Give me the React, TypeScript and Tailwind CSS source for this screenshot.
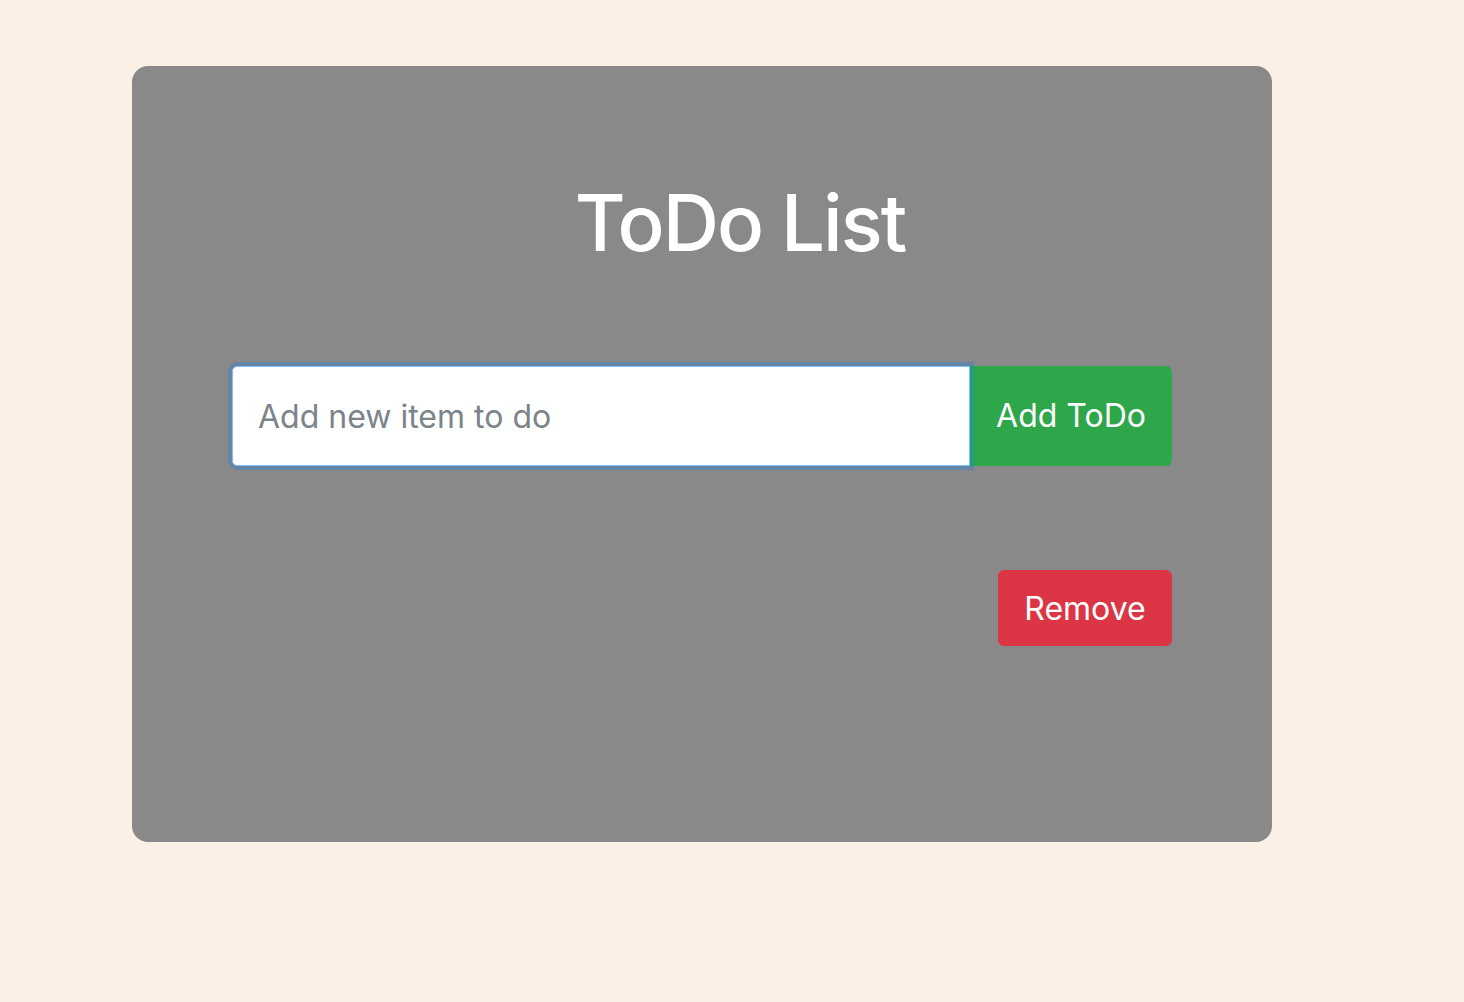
import React from "react";

export default function App() {
  return (
    <div
      className="min-h-screen w-full bg-[#faf0e6] pt-[66px] pl-[132px]"
      style={{ fontFamily: "Inter, 'Noto Sans', sans-serif" }}
    >
      <div className="w-[1140px] h-[776px] rounded-[16px] bg-[#898989] px-[100px] pt-[118px]">
        <h1 className="text-center pl-[76px] text-[78px] leading-[78px] font-medium text-white tracking-[-2px]">
          ToDo List
        </h1>
        <div className="mt-[104px] flex h-[100px]">
          <input
            type="text"
            placeholder="Add new item to do"
            className="relative z-10 flex-1 h-[100px] rounded-l-[5px] border border-[#80bdff] bg-white px-[25px] text-[32px] text-[#495057] placeholder:text-[#7b838b] outline-none shadow-[0_0_0_4px_rgba(0,123,255,0.25)]"
          />
          <button className="w-[202px] h-[100px] rounded-r-[6px] bg-[#2ea64a] text-[32px] text-white">
            Add ToDo
          </button>
        </div>
        <div className="mt-[104px] flex justify-end">
          <button className="w-[174px] h-[76px] pt-[2px] rounded-[6px] bg-[#dc3545] text-[32px] text-white">
            Remove
          </button>
        </div>
      </div>
    </div>
  );
}
